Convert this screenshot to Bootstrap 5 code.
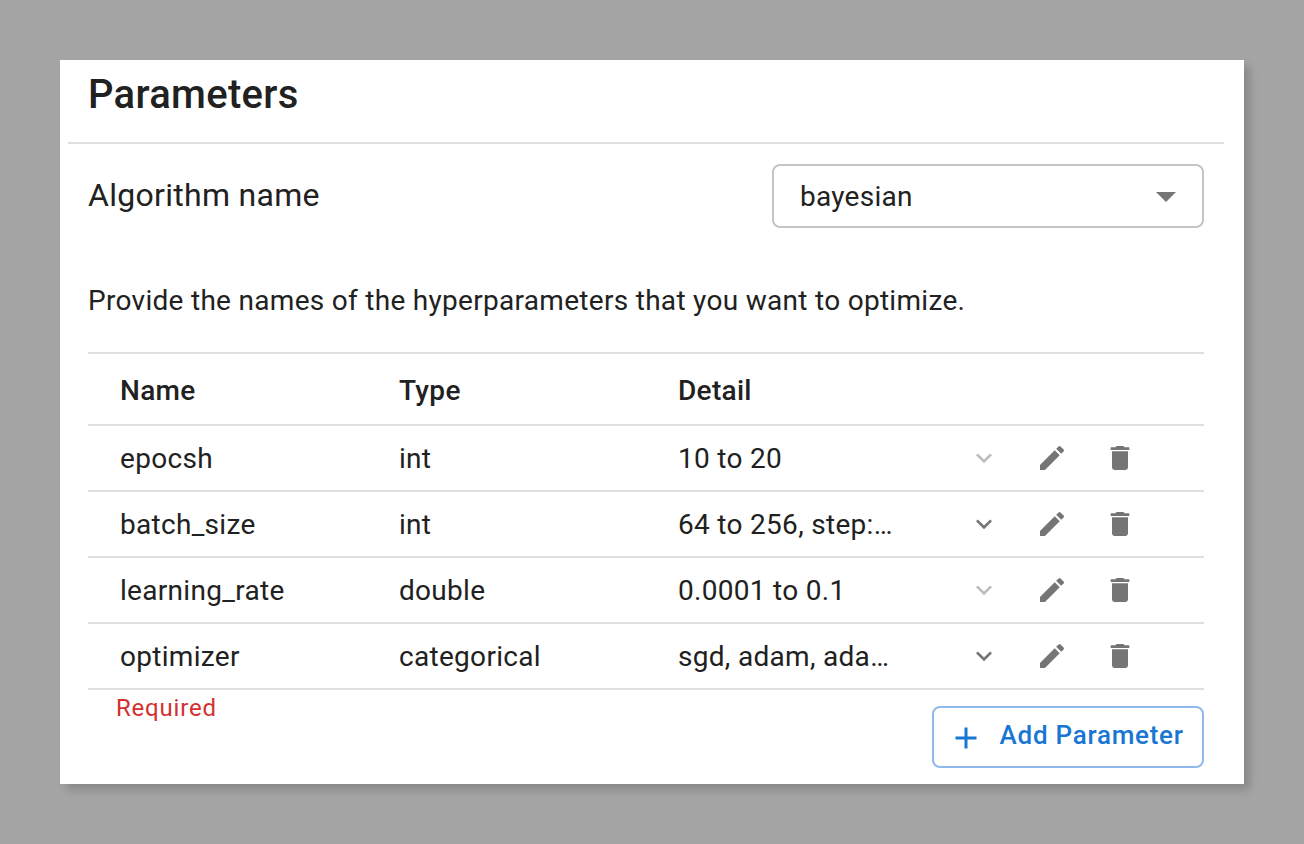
<!DOCTYPE html>
<html lang="en">
<head>
<meta charset="utf-8">
<meta name="viewport" content="width=device-width, initial-scale=1">
<title>Parameters</title>
<link href="https://cdn.jsdelivr.net/npm/bootstrap@5.3.0/dist/css/bootstrap.min.css" rel="stylesheet">
<style>
  body { background: #a4a4a4; color: #212121; font-family: Roboto, "Liberation Sans", sans-serif; font-size: 28px; line-height: 40px; letter-spacing: .01071em; padding: 60px; height: 844px; overflow: hidden; }
  .panel { height: 724px; box-shadow: 6px 6px 8px rgba(0,0,0,.16); }
  .panel-head { margin: 0 20px 0 8px; padding: 3px 20px 0; height: 84px; border-bottom: 2px solid #e0e0e0; }
  .panel-head h1 { font-size: 40px; line-height: 64px; font-weight: 500; letter-spacing: .0075em; }
  .panel-main { padding: 20px 40px 0 28px; }
  .algo-label { font-size: 32px; letter-spacing: .009em; padding-bottom: 2px; }
  .picker { width: 432px; height: 64px; padding: 0 12px 0 26px; border: 2px solid #c4c4c4; border-radius: 8px; background: #fff; color: inherit; letter-spacing: .00938em; }
  .picker span { padding-top: 2px; }
  .intro { margin: 53px 0 31px; height: 40px; letter-spacing: .0105em; }
  .params { color: inherit; table-layout: fixed; border-top: 2px solid #e0e0e0; }
  .params > :not(caption) > * > * { padding: 2px 32px 0; height: 66px; border-bottom: 2px solid #e0e0e0; color: inherit; background: none; box-shadow: none; }
  .params > thead > tr > th { height: 72px; padding-top: 4px; font-weight: 500; vertical-align: middle; }
  .params > tbody > tr > td:last-child { padding: 0 15px 0 43px; }
  svg { fill: #757575; flex: none; display: block; }
  .actions { gap: 36px; }
  .actions .faded { fill: #bdbdbd; }
  .hint { color: #d32f2f; font-size: 24px; letter-spacing: .03333em; margin: -2px 0 0 28px; }
  .add-btn { width: 272px; height: 62px; margin-top: 16px; padding: 0 18px; border: 2px solid #8fb9eb; border-radius: 8px; color: #1976d2; font-size: 26px; font-weight: 500; letter-spacing: .02857em; white-space: nowrap; }
  .add-btn svg { fill: #1976d2; margin: 2px 15.5px 0 -4px; }
  .add-btn span { padding-bottom: 4px; }
</style>
</head>
<body>
<svg width="0" height="0" class="position-absolute" aria-hidden="true">
  <symbol id="chevron" viewBox="0 0 24 24"><path d="M7.41 8.59 12 13.17l4.59-4.58L18 10l-6 6-6-6z"/></symbol>
  <symbol id="edit" viewBox="0 0 24 24"><path d="M3 17.25V21h3.75L17.81 9.94l-3.75-3.75L3 17.25zM20.71 7.04c.39-.39.39-1.02 0-1.41l-2.34-2.34a.9959.9959 0 0 0-1.41 0l-1.83 1.83 3.75 3.75 1.83-1.83z"/></symbol>
  <symbol id="trash" viewBox="0 0 24 24"><path d="M6 19c0 1.1.9 2 2 2h8c1.1 0 2-.9 2-2V7H6v12zM19 4h-3.5l-1-1h-5l-1 1H5v2h14V4z"/></symbol>
</svg>
<main class="panel bg-white">
  <header class="panel-head"><h1 class="m-0">Parameters</h1></header>
  <div class="panel-main">
    <div class="d-flex justify-content-between align-items-center">
      <label class="algo-label" for="algorithm">Algorithm name</label>
      <button type="button" id="algorithm" class="picker d-flex align-items-center justify-content-between"><span>bayesian</span>
        <svg width="48" height="48" viewBox="0 0 24 24"><path d="m7 10 5 5 5-5z"/></svg>
      </button>
    </div>
    <p class="intro">Provide the names of the hyperparameters that you want to optimize.</p>
    <table class="table params m-0 align-middle">
      <thead><tr><th>Name</th><th>Type</th><th>Detail</th><th></th></tr></thead>
      <tbody>
        <tr><td>epocsh</td><td>int</td><td>10 to 20</td>
          <td><div class="actions d-flex"><svg class="faded" width="32" height="32"><use href="#chevron"/></svg><svg width="32" height="32"><use href="#edit"/></svg><svg width="32" height="32"><use href="#trash"/></svg></div></td></tr>
        <tr><td>batch_size</td><td>int</td><td>64 to 256, step:…</td>
          <td><div class="actions d-flex"><svg width="32" height="32"><use href="#chevron"/></svg><svg width="32" height="32"><use href="#edit"/></svg><svg width="32" height="32"><use href="#trash"/></svg></div></td></tr>
        <tr><td>learning_rate</td><td>double</td><td>0.0001 to 0.1</td>
          <td><div class="actions d-flex"><svg class="faded" width="32" height="32"><use href="#chevron"/></svg><svg width="32" height="32"><use href="#edit"/></svg><svg width="32" height="32"><use href="#trash"/></svg></div></td></tr>
        <tr><td>optimizer</td><td>categorical</td><td>sgd, adam, ada…</td>
          <td><div class="actions d-flex"><svg width="32" height="32"><use href="#chevron"/></svg><svg width="32" height="32"><use href="#edit"/></svg><svg width="32" height="32"><use href="#trash"/></svg></div></td></tr>
      </tbody>
    </table>
    <div class="d-flex justify-content-between align-items-start">
      <div class="hint">Required</div>
      <button type="button" class="add-btn btn d-flex align-items-center">
        <svg width="36" height="36" viewBox="0 0 24 24"><path d="M19 13h-6v6h-2v-6H5v-2h6V5h2v6h6z"/></svg><span>Add Parameter</span>
      </button>
    </div>
  </div>
</main>
<script src="https://cdn.jsdelivr.net/npm/bootstrap@5.3.0/dist/js/bootstrap.bundle.min.js"></script>
</body>
</html>
